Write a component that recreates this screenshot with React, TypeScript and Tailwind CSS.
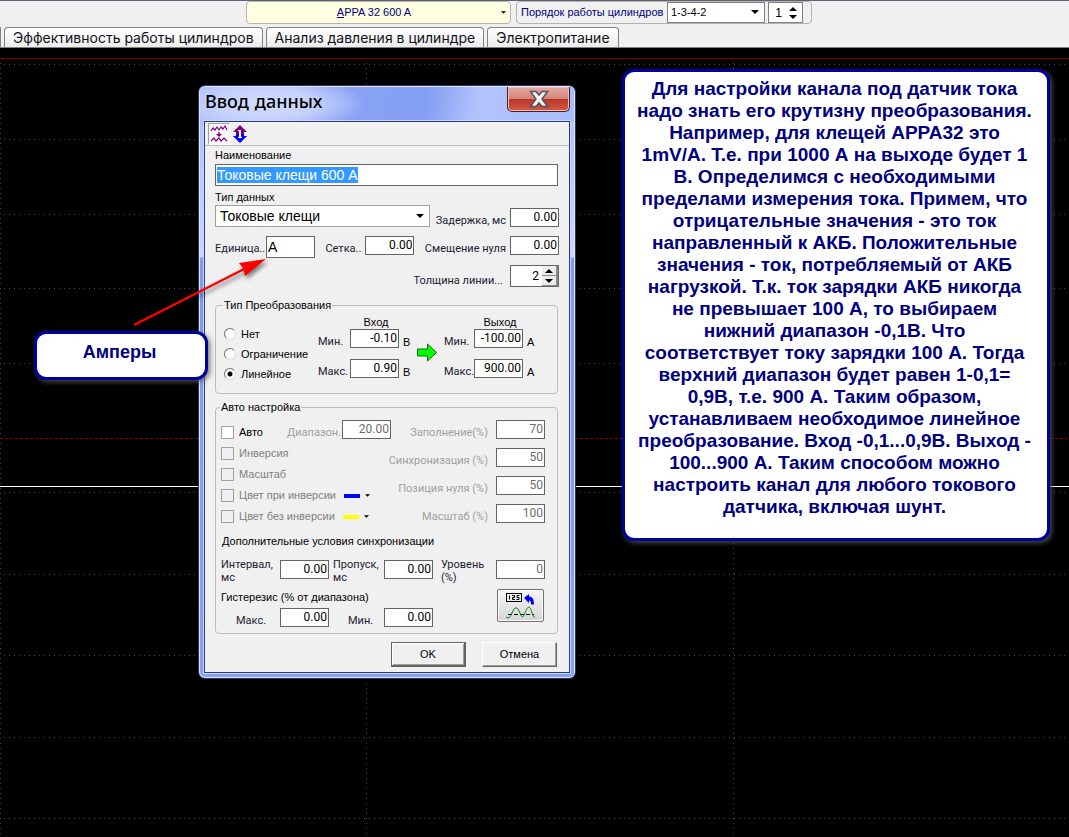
import { useEffect, useRef, type ReactNode } from 'react';

const ROWS = [64, 139, 214, 288, 363, 492, 574, 655, 737, 818];
const COLS = [0, 366, 733];

const HELP_LINES = [
  'Для настройки канала под датчик тока',
  'надо знать его крутизну преобразования.',
  'Например, для клещей APPA32 это',
  '1mV/A. Т.е. при 1000 А на выходе будет 1',
  'В. Определимся с необходимыми',
  'пределами измерения тока. Примем, что',
  'отрицательные значения - это ток',
  'направленный к АКБ. Положительные',
  'значения - ток, потребляемый от АКБ',
  'нагрузкой. Т.к. ток зарядки АКБ никогда',
  'не превышает 100 А, то выбираем',
  'нижний диапазон -0,1В. Что',
  'соответствует току зарядки 100 А. Тогда',
  'верхний диапазон будет равен 1-0,1=',
  '0,9В, т.е. 900 А. Таким образом,',
  'устанавливаем необходимое линейное',
  'преобразование. Вход -0,1...0,9В. Выход -',
  '100...900 А. Таким способом можно',
  'настроить канал для любого токового',
  'датчика, включая шунт.',
];

const numberFont = 'font-[Roboto,sans-serif] text-[12px]';
const labelFont = 'font-[Roboto,sans-serif] text-[11px]';

function Caret({ up = false, className = 'h-1 w-2' }: { up?: boolean; className?: string }) {
  return (
    <svg viewBox="0 0 8 4" className={className} aria-hidden="true">
      <path d={up ? 'M0 4h8L4 0z' : 'M0 0h8L4 4z'} fill="#000" />
    </svg>
  );
}

interface FieldProps {
  id: string;
  label: ReactNode;
  value: string;
  labelClass?: string;
  disabled?: boolean;
  unit?: string;
}

function Field({ id, label, value, labelClass = '', disabled = false, unit }: FieldProps) {
  return (
    <div className="flex items-start">
      <label
        htmlFor={id}
        className={`${labelFont} h-[19px] shrink-0 pt-[6px] leading-[14px] whitespace-nowrap ${
          disabled ? 'text-[#a0a0a0]' : 'text-[#1c2033]'
        } ${labelClass}`}
      >
        {label}
      </label>
      <NumberBox id={id} value={value} disabled={disabled} />
      {unit && <span className="w-3 pt-[6px] pl-1 leading-[14px]">{unit}</span>}
    </div>
  );
}

function NumberBox({ id, value, disabled = false }: { id: string; value: string; disabled?: boolean }) {
  return (
    <input
      id={id}
      defaultValue={value}
      disabled={disabled}
      className={`${numberFont} h-[19px] w-[49px] shrink-0 border border-[#646464] bg-white pr-px pb-px text-right text-black outline-none disabled:text-[#6d6d6d]`}
    />
  );
}

function Check({ label, disabled = true, children }: { label: string; disabled?: boolean; children?: ReactNode }) {
  return (
    <div className="flex h-[21px] items-center">
      <label className={`flex items-center gap-[5px] whitespace-nowrap ${disabled ? 'text-[#808080]' : 'text-black'}`}>
        <input
          type="checkbox"
          disabled={disabled}
          className="size-[13px] appearance-none border border-[#a0a0a0] bg-white disabled:bg-[#f0f0f0]"
        />
        {label}
      </label>
      {children}
    </div>
  );
}

function ColorPick({ label, swatch }: { label: string; swatch: string }) {
  return (
    <button type="button" aria-label={label} className="ml-2 flex items-center gap-[5px]">
      <span className={`h-1 w-4 ${swatch}`} />
      <Caret className="h-[3px] w-[5px]" />
    </button>
  );
}

function Radio({ label, checked = false }: { label: string; checked?: boolean }) {
  return (
    <label className="flex h-5 items-center gap-[5px]">
      <input
        type="radio"
        name="transform"
        defaultChecked={checked}
        className="size-3 appearance-none rounded-full border border-t-[#707070] border-r-[#dcdcdc] border-b-[#dcdcdc] border-l-[#707070] bg-white checked:bg-[radial-gradient(circle,#000_2px,#fff_3px)]"
      />
      {label}
    </label>
  );
}

function TopBar() {
  return (
    <header className="h-12 border-t border-[#5f6070] bg-[#f0f0f0]">
      <div className="flex h-[26px] items-start gap-[5px] pl-[246px] text-[11px]">
        <button
          type="button"
          className="flex h-[23px] w-[265px] shrink-0 items-center rounded-sm border border-[#b4b4b4] bg-[#ffffe1] pr-1 text-[#000080]"
        >
          <span className="flex-1 text-center">
            <u>A</u>PPA 32 600 A
          </span>
          <Caret className="h-[3px] w-[5px]" />
        </button>
        <div className="flex h-[23px] w-[296px] shrink-0 items-center rounded-sm border border-[#b4b4b4] pl-1">
          <label htmlFor="order" className="w-[146px] whitespace-nowrap text-[#000080]">
            Порядок работы цилиндров
          </label>
          <div className="relative">
            <select
              id="order"
              className="block h-[21px] w-[98px] appearance-none border border-[#808080] bg-white pl-[3px] text-black outline-none"
            >
              <option>1-3-4-2</option>
            </select>
            <Caret className="pointer-events-none absolute top-2 right-[6px] h-1 w-2" />
          </div>
          <div className="ml-[3px] flex h-[21px] w-[35px] items-center border border-[#808080] bg-white">
            <input
              aria-label="Цилиндр"
              defaultValue="1"
              className="w-[13px] text-right text-[12px] outline-none"
            />
            <div className="ml-[7px] flex flex-col gap-1">
              <button type="button" aria-label="Больше" className="flex">
                <Caret up />
              </button>
              <button type="button" aria-label="Меньше" className="flex">
                <Caret />
              </button>
            </div>
          </div>
        </div>
      </div>
      <nav className="flex h-[21px] items-stretch gap-[3px] border-b border-[#808080] font-[Inter,sans-serif] text-[14px]">
        <span className="w-px rounded-tr-sm border-t border-r border-[#808080]" />
        {['Эффективность работы цилиндров', 'Анализ давления в цилиндре', 'Электропитание'].map((t) => (
          <button
            key={t}
            type="button"
            className="rounded-t-sm border border-b-0 border-[#808080] bg-linear-to-b from-white to-[#ececec] px-2 leading-[19px] whitespace-nowrap text-[#101020]"
          >
            {t}
          </button>
        ))}
      </nav>
    </header>
  );
}

function Scope() {
  return (
    <svg className="absolute inset-0 h-full w-full" aria-hidden="true">
      <g transform="translate(0 -48)" shapeRendering="crispEdges">
        {ROWS.map((y) => (
          <line key={y} x1="4" x2="100%" y1={y + 0.5} y2={y + 0.5} stroke="#4a4a4a" strokeDasharray="1 4" />
        ))}
        {COLS.map((x) => (
          <line key={x} x1={x + 0.5} x2={x + 0.5} y1="63" y2="2000" stroke="#4a4a4a" strokeDasharray="1 4" />
        ))}
        <line x1="0" x2="100%" y1="58.5" y2="58.5" stroke="#800000" />
        <line x1="0" x2="100%" y1="438.5" y2="438.5" stroke="#800000" strokeDasharray="3 2" />
        <line x1="0" x2="100%" y1="486.5" y2="486.5" stroke="#fff" />
      </g>
    </svg>
  );
}

function SignalIcon() {
  return (
    <svg viewBox="0 0 18 18" className="size-[18px]" fill="none" stroke="#800080" aria-hidden="true">
      <path d="M1 6l2-3 2 2 2-3 2 3 2-3 2 2 2-3 2 4" strokeWidth="1.200" />
      <path d="M1 16l3-3 2 3 3-3 2 3 3-3 3 3" strokeWidth="1.200" />
      <path d="M6 9h6l-3 3z" fill="#800080" stroke="none" />
      <path d="M9 7v3" strokeWidth="1.500" />
    </svg>
  );
}

function UpDownIcon() {
  return (
    <svg viewBox="0 0 14 18" className="h-[18px] w-[14px]" aria-hidden="true">
      <path d="M7 0l7 7h-3v2H3V7H0z" fill="#800080" />
      <path d="M7 18l7-7h-3V9H3v2H0z" fill="#00f" />
      <path d="M5 5h3v7h1v1H5v-1h1V6H5z" fill="#fff" />
    </svg>
  );
}

function WaveIcon() {
  return (
    <svg viewBox="0 0 30 28" className="h-7 w-[30px]" fill="none" aria-hidden="true">
      <rect x="0.500" y="1.500" width="15" height="8" stroke="#000" />
      <path d="M3.500 3.500v4M6 3.500h2.500v2H6.500v2H9M13.500 3.500H11v2h2v2h-2.500" stroke="#000" />
      <path d="M18 6l5-4v2.500c3 0 5 2 5 8h-3c0-3-.5-4-2-4V11z" fill="#00f" />
      <path d="M2 22.500h26" stroke="#000" strokeDasharray="4 2" />
      <path d="M0 25c3 2 4 0 6-4 3-7 5-7 8 0 2 5 3 5 5 0 3-8 5-8 7 0 1 3 2 4 3 5" stroke="#008000" />
    </svg>
  );
}

function DataDialog() {
  const nameRef = useRef<HTMLInputElement>(null);

  useEffect(() => {
    nameRef.current?.focus();
    nameRef.current?.select();
  }, []);

  return (
    <section
      role="dialog"
      aria-labelledby="dialog-title"
      className="absolute top-[37px] left-[198px] w-[378px] overflow-hidden rounded-[7px] border border-[#2a3566] bg-[linear-gradient(180deg,#a9bdf9_0,#ccd6fd_171px,#7f9bf0_172px,#86a0f2_100%)] px-[5px] pb-[5px] text-[11px] text-black shadow-[inset_0_0_0_1px_#dfe8ff]"
    >
      <div className="-mx-1 mt-px flex h-[34px] items-start justify-between bg-[radial-gradient(ellipse_100px_30px_at_64px_17px,#d3ddfe_0,#c6d2fd_50%,transparent_100%),linear-gradient(100deg,#a9bbf9_0,#8ba4f4_38%,#829df2_60%,#b2c3fc_74%,#a9bcfa_100%)] pr-[4px] pl-[5px]">
        <h1
          id="dialog-title"
          className='font-["Comic_Sans_MS","Comic_Neue","Noto_Sans",sans-serif] text-[18px] leading-8 font-medium'
        >
          Ввод данных
        </h1>
        <button
          type="button"
          aria-label="Закрыть"
          className="flex h-[25px] w-[63px] items-center justify-center rounded-b-[5px] border border-t-0 border-[#4b1c24] bg-[linear-gradient(180deg,#e5aaa4_0,#d4857b_48%,#b93625_50%,#cf5a47_100%)] shadow-[inset_0_0_0_1px_#f0c0b8]"
        >
          <svg viewBox="0 0 20 18" className="h-[18px] w-5" aria-hidden="true">
            <path
              d="M1.500 1.500h5.500L10 5l3-3.500h5.500L13 9l5.500 7.500H13L10 13l-3 3.500H1.500L7 9z"
              fill="#f2f2f4"
              stroke="#54525e"
              strokeWidth="1.500"
            />
          </svg>
        </button>
      </div>

      <form
        onSubmit={(e) => e.preventDefault()}
        className="border border-[#2b3d78] bg-[#f0f0f0] pb-1 shadow-[0_0_0_1px_#c9d6ff]"
      >
        <div className="flex h-6 items-center gap-[3px] border-b border-[#bdbdbd] pl-[3px]">
          <button
            type="button"
            aria-label="Сигнал"
            className="flex size-[22px] items-center justify-center border border-t-[#a0a0a0] border-r-white border-b-white border-l-[#a0a0a0] bg-[#f8f8f8]"
          >
            <SignalIcon />
          </button>
          <button type="button" aria-label="Сдвиг" className="flex">
            <UpDownIcon />
          </button>
        </div>

        <div className="flex flex-col px-[10px] pt-[2px]">
          <label htmlFor="name" className="leading-[15px]">
            Наименование
          </label>
          <input
            id="name"
            ref={nameRef}
            defaultValue="Токовые клещи 600 А"
            className="mt-px h-[22px] w-[343px] border border-[#646464] bg-white px-px text-[14px] outline-none selection:bg-[#3399ff] selection:text-white"
          />
          <label htmlFor="kind" className="mt-1 leading-[15px]">
            Тип данных
          </label>
          <div className="flex items-end justify-between">
            <div className="relative">
              <select
                id="kind"
                className="block h-[22px] w-[215px] appearance-none border border-[#a0a0a0] bg-white pl-1 text-[14px] outline-none"
              >
                <option>Токовые клещи</option>
              </select>
              <Caret className="pointer-events-none absolute top-[9px] right-[6px] h-1 w-2" />
            </div>
            <Field id="delay" label="Задержка, мс" value="0.00" labelClass="pr-1" />
          </div>

          <div className="mt-[9px] flex h-[22px] items-start justify-between">
            <div className="flex items-start">
              <label
                htmlFor="unit"
                className={`${labelFont} w-[51px] pt-[6px] leading-[14px] whitespace-nowrap text-[#1c2033]`}
              >
                Единица..
              </label>
              <input
                id="unit"
                defaultValue="А"
                className="h-[22px] w-[49px] border border-[#646464] bg-white px-px text-[14px] outline-none"
              />
            </div>
            <Field id="grid" label="Сетка.." value="0.00" labelClass="w-10" />
            <Field id="zero" label="Смещение нуля" value="0.00" labelClass="pr-1" />
          </div>

          <div className="mt-[7px] flex items-start justify-end">
            <label
              htmlFor="thickness"
              className={`${labelFont} pt-[9px] pr-[7px] leading-[14px] text-[#1c2033]`}
            >
              Толщина линии...
            </label>
            <div className="flex h-[22px] w-[49px] border border-[#646464] bg-white">
              <input
                id="thickness"
                defaultValue="2"
                className={`${numberFont} w-7 pb-px text-right outline-none`}
              />
              <div className="ml-[3px] flex w-4 flex-col">
                <button
                  type="button"
                  aria-label="Толще"
                  className="flex flex-1 items-center justify-center border-r-2 border-b border-[#8a8a8a] bg-[#ececec]"
                >
                  <Caret up />
                </button>
                <button
                  type="button"
                  aria-label="Тоньше"
                  className="flex flex-1 items-center justify-center border-r-2 border-b border-[#8a8a8a] bg-[#ececec]"
                >
                  <Caret />
                </button>
              </div>
            </div>
          </div>

          <fieldset className="mt-[10px] h-24 w-[343px] rounded-sm border border-[#bdbdbd]">
            <legend className="ml-[7px] px-px leading-[14px]">Тип Преобразования</legend>
            <div className="flex items-start pl-2">
              <div className="w-[94px] pt-3">
                <Radio label="Нет" />
                <Radio label="Ограничение" />
                <Radio label="Линейное" checked />
              </div>
              <div className="flex flex-col pt-[3px]">
                <span className="w-[116px] text-center leading-[14px]">Вход</span>
                <Field id="in-min" label="Мин." value="-0.10" labelClass="w-8" unit="В" />
                <div className="mt-[10px]">
                  <Field id="in-max" label="Макс." value="0.90" labelClass="w-8" unit="В" />
                </div>
              </div>
              <svg viewBox="0 0 20 19" className="-ml-[17px] mt-[31px] mr-[7px] h-[19px] w-5" aria-hidden="true">
                <path d="M.5 6h10V1l9 8.500-9 8.500v-5H.5z" fill="#0f0" stroke="#107010" />
              </svg>
              <div className="flex flex-col pt-[3px]">
                <span className="w-[112px] text-center leading-[14px]">Выход</span>
                <Field id="out-min" label="Мин." value="-100.00" labelClass="w-[30px]" unit="А" />
                <div className="mt-[10px]">
                  <Field id="out-max" label="Макс." value="900.00" labelClass="w-[30px]" unit="А" />
                </div>
              </div>
            </div>
          </fieldset>

          <fieldset className="mt-[6px] h-[234px] w-[343px] min-w-0 rounded-sm border border-[#bdbdbd]">
            <legend className="ml-1 px-px leading-[14px]">Авто настройка</legend>
            <div className="flex items-start justify-between pt-[6px] pr-3 pl-[5px]">
              <div className="w-40 shrink-0">
                <div className="flex h-[23px] items-end">
                  <Check label="Авто" disabled={false} />
                  <div className="ml-6 self-start">
                    <Field id="range" label="Диапазон.." value="20.00" disabled labelClass="w-[55px]" />
                  </div>
                </div>
                <Check label="Инверсия" />
                <Check label="Масштаб" />
                <Check label="Цвет при инверсии">
                  <ColorPick label="Цвет при инверсии" swatch="bg-[#00f]" />
                </Check>
                <Check label="Цвет без инверсии">
                  <ColorPick label="Цвет без инверсии" swatch="bg-[#ff0]" />
                </Check>
              </div>
              <div className="flex flex-col items-end gap-[9px]">
                <Field id="fill" label="Заполнение(%)" value="70" disabled labelClass="pr-2" />
                <Field id="sync" label="Синхронизация (%)" value="50" disabled labelClass="pr-2" />
                <Field id="zero-pos" label="Позиция нуля (%)" value="50" disabled labelClass="pr-2" />
                <Field id="scale" label="Масштаб (%)" value="100" disabled labelClass="pr-2" />
              </div>
            </div>

            <p className="mt-[7px] pl-[6px] leading-[14px]">Дополнительные условия синхронизации</p>
            <div className={`${labelFont} mt-[10px] flex items-start pl-[5px] leading-[13px] text-[#1c2033]`}>
              <label htmlFor="interval" className="w-[59px]">
                Интервал,
                <br />
                мс
              </label>
              <div className="flex pt-[2px]">
                <NumberBox id="interval" value="0.00" />
              </div>
              <label htmlFor="skip" className="ml-1 w-[51px]">
                Пропуск,
                <br />
                мс
              </label>
              <div className="flex pt-[2px]">
                <NumberBox id="skip" value="0.00" />
              </div>
              <label htmlFor="level" className="ml-2 w-[55px]">
                Уровень
                <br />
                (%)
              </label>
              <div className="flex pt-[2px]">
                <NumberBox id="level" value="0" disabled />
              </div>
            </div>
            <div className="mt-[5px] flex items-start justify-between pr-[13px] pl-[5px]">
              <div>
                <p className="pt-px leading-[14px]">Гистерезис (% от диапазона)</p>
                <div className="mt-1 flex gap-[19px] pl-[15px]">
                  <Field id="hyst-max" label="Макс." value="0.00" labelClass="w-11" />
                  <Field id="hyst-min" label="Мин." value="0.00" labelClass="w-9" />
                </div>
              </div>
              <button
                type="button"
                aria-label="Применить"
                className="flex h-[33px] w-[47px] items-center justify-center rounded-[2px] border border-[#707070] bg-linear-to-b from-[#f6f6f6] to-[#d6d6d6] shadow-[inset_0_0_0_1px_#fcfcfc]"
              >
                <WaveIcon />
              </button>
            </div>
          </fieldset>

          <div className="mt-2 flex justify-end gap-4 pr-[2px] pb-px">
            <button
              type="submit"
              className="h-[25px] w-[75px] border border-r-2 border-b-2 border-[#646464] bg-[#f0f0f0] shadow-[inset_1px_1px_0_#fff,inset_-1px_-1px_0_#a0a0a0]"
            >
              OK
            </button>
            <button
              type="button"
              className="h-[25px] w-[75px] border border-t-white border-r-[#646464] border-b-[#646464] border-l-white bg-[#f0f0f0] shadow-[inset_-1px_-1px_0_#a0a0a0]"
            >
              Отмена
            </button>
          </div>
        </div>
      </form>
    </section>
  );
}

export default function App() {
  return (
    <div className='flex min-h-screen flex-col bg-black font-["Liberation_Sans",Arial,sans-serif]'>
      <TopBar />
      <main className="relative min-h-[700px] flex-1 overflow-hidden">
        <Scope />
        <DataDialog />

        <aside className="absolute top-[283px] left-[34px] h-[49px] w-[174px] rounded-xl border-[3px] border-[#0000a0] bg-white pt-[7px] pr-[3px] text-center text-[18px] leading-[22px] font-bold text-[#000080] shadow-[2px_2px_5px_rgba(90,90,90,0.8)]">
          Амперы
        </aside>
        <svg
          viewBox="0 0 140 76"
          className="absolute top-[206px] left-[130px] h-[76px] w-[140px] drop-shadow-[2px_3px_2px_rgba(0,0,0,0.5)]"
          aria-hidden="true"
        >
          <path d="M4 71L118 13" stroke="#f00" strokeWidth="2.500" />
          <path d="M136 5L109 9l4 5 2 8z" fill="#f00" />
        </svg>

        <aside className="absolute top-[21px] left-[622px] w-[428px] rounded-xl border-[3px] border-[#0000a0] bg-white pt-[6px] pr-[3px] pb-[20px] text-center text-[19px] leading-[22px] font-bold text-[#000080] shadow-[2px_2px_5px_rgba(90,90,90,0.8)]">
          {HELP_LINES.map((line) => (
            <p key={line} className="whitespace-nowrap">
              {line}
            </p>
          ))}
        </aside>
      </main>
    </div>
  );
}
